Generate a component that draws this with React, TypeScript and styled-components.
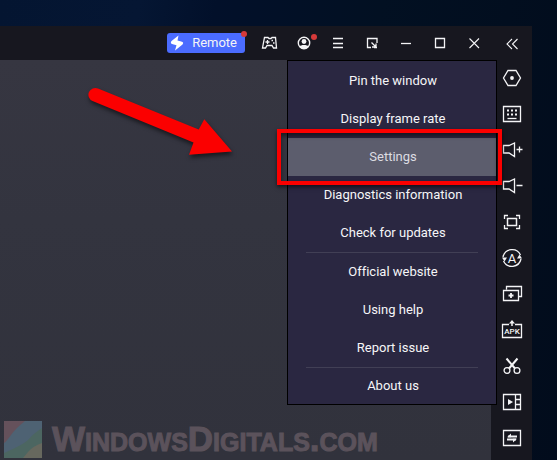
import React from "react";
import styled, { createGlobalStyle, css } from "styled-components";

const GlobalStyle = createGlobalStyle`
  *, *::before, *::after { box-sizing: border-box; }
  html, body, #root { height: 100%; }
  body { margin: 0; overflow: hidden; font-family: Roboto, "Liberation Sans", sans-serif; }
  button { font: inherit; border: 0; padding: 0; color: inherit; background: none; cursor: pointer; }
`;

const Desktop = styled.div`
  height: 100%;
  padding: 26px 25px 0 0;
  background: linear-gradient(100deg, #041531 0%, #051633 22%, #02102a 34%, #021022 60%, #020c1c 100%);
`;

const Window = styled.div`
  position: relative;
  height: 100%;
  display: flex;
  flex-direction: column;
  background: #17171f;
  color: #f4f4f6;
`;

const TitleBar = styled.header`
  flex: none;
  height: 34px;
  display: flex;
  align-items: center;
  justify-content: flex-end;
`;

const RemoteButton = styled.button`
  position: relative;
  display: flex;
  align-items: center;
  gap: 8px;
  height: 20px;
  margin-right: 8px;
  padding: 0 8px 0 3px;
  border-radius: 3px;
  background: #4b6cff;
  font-size: 13px;
  line-height: 20px;
`;

const BarButton = styled.button<{ $wide?: boolean }>`
  position: relative;
  width: ${(p) => (p.$wide ? 41 : 34)}px;
  height: 34px;
  display: grid;
  place-items: center;
`;

const Dot = styled.span<{ $corner?: boolean }>`
  position: absolute;
  width: 6px;
  height: 6px;
  border-radius: 50%;
  background: #d63a3a;
  ${(p) =>
    p.$corner
      ? css`top: -2px; right: -2px;`
      : css`top: 8px; right: 4px;`}
`;

const Body = styled.div`
  flex: 1;
  min-height: 0;
  display: flex;
`;

const Canvas = styled.main`
  position: relative;
  flex: 1;
  min-width: 0;
  display: flex;
  align-items: flex-end;
  background: linear-gradient(#363641, #33343f 40%, #31323c);
`;

const Watermark = styled.div`
  display: flex;
  align-items: center;
  gap: 10px;
  padding: 0 0 2px 4px;
`;

const WatermarkText = styled.span`
  font: 700 35px/38px "Liberation Sans", sans-serif;
  font-variant: small-caps;
  color: #5b525b;
  -webkit-text-stroke: 1px #5b525b;
  white-space: nowrap;
`;

const Arrow = styled.svg`
  position: absolute;
  top: 20px;
  left: 80px;
  filter: drop-shadow(1px 3px 2px rgba(0, 0, 0, 0.55));
`;

const Sidebar = styled.nav`
  flex: none;
  width: 41px;
  display: flex;
  flex-direction: column;
  overflow: hidden;
`;

const ToolButton = styled.button`
  flex: none;
  height: 36px;
  display: grid;
  place-items: center;
`;

const Menu = styled.div`
  position: absolute;
  top: 34px;
  right: 35px;
  width: 210px;
  display: flex;
  flex-direction: column;
  padding-top: 1px;
  border: 1px solid #000;
  background: #2a2741;
`;

const MenuItem = styled.button<{ $active?: boolean; $last?: boolean }>`
  position: relative;
  height: ${(p) => (p.$last ? 36 : 38)}px;
  padding-left: 2px;
  font-size: 13px;
  line-height: 16px;
  font-variant-ligatures: none;
  text-align: center;
  color: ${(p) => (p.$active ? "#dcdce2" : "#f6f6f8")};
  background: ${(p) => (p.$active ? "#5c5d6d" : "transparent")};
`;

const Divider = styled.hr`
  width: 172px;
  height: 1px;
  margin: 0 auto;
  border: 0;
  background: #413f55;
`;

const Highlight = styled.span`
  position: absolute;
  inset: -9px -6px -9px -11px;
  border: 4px solid #fb0000;
  box-shadow: 0 2px 4px rgba(0, 0, 0, 0.6), inset 0 3px 4px rgba(0, 0, 0, 0.5);
  pointer-events: none;
`;

const Glyph = styled.svg`
  display: block;
  fill: none;
  stroke: currentColor;
  stroke-width: 1.3;
`;

const IconText = styled.text<{ $small?: boolean }>`
  font: ${(p) => (p.$small ? '500 8px Roboto, sans-serif' : "400 13px Roboto, sans-serif")};
  fill: currentColor;
  stroke: none;
  text-anchor: middle;
`;

const Icon = ({ size = 22, children }: { size?: number; children: React.ReactNode }) => (
  <Glyph width={size} height={size} viewBox={`0 0 ${size} ${size}`} aria-hidden="true">
    {children}
  </Glyph>
);

const barButtons = [
  {
    label: "Game controls",
    art: (
      <>
        <path d="M5.500 5.500h3.500l1 1h2l1-1h3.500l1 10.500h-3l-1.500-2.500h-5L6.500 16h-3z" strokeWidth="1.300" />
        <path d="M8.500 8v4M6.500 10h4" />
        <path d="M12.500 8.500h1.500M14 11h1.500" strokeWidth="1.500" />
      </>
    ),
  },
  {
    label: "Account",
    dot: true,
    art: (
      <>
        <circle cx="11" cy="11" r="5.700" strokeWidth="1.400" />
        <circle cx="11" cy="9.500" r="2.400" fill="currentColor" stroke="none" />
        <path d="M6.500 14.500c1-2 8-2 9 0-2 3-7 3-9 0z" fill="currentColor" stroke="none" />
      </>
    ),
  },
  { label: "Menu", art: <path d="M6 6.500h10M6 11.500h10M6 15.500h10" /> },
  {
    label: "Dock window",
    art: (
      <>
        <path d="M10 15.500H6.500v-9h9.500V11M16 15.500h-3" />
        <path d="M10.500 10.500l4 4M15 11.500v3.500h-4" />
      </>
    ),
  },
  { label: "Minimize", art: <path d="M6 11.500h10" /> },
  { label: "Maximize", art: <path d="M6.500 6.500h9v9h-9z" /> },
  { label: "Close", art: <path d="M6.500 6.500l9.500 9.500M16 6.500l-9.500 9.500" strokeWidth="1.100" /> },
];

const tools = [
  {
    label: "Quick settings",
    art: (
      <>
        <path d="M7 3.500h8l4.500 7.500-4.500 7.500H7L2.500 11z" />
        <circle cx="11" cy="11" r="1.900" fill="currentColor" stroke="none" />
      </>
    ),
  },
  {
    label: "Keyboard",
    art: (
      <>
        <path d="M2.500 3.500h17v15h-17z" />
        <path d="M6 7.500h2M10 7.500h2M14 7.500h2M6 11.500h2M10 11.500h2M14 11.500h2" strokeWidth="1.800" />
        <path d="M6.500 15.500h9" />
      </>
    ),
  },
  {
    label: "Volume up",
    art: <path d="M2.500 6.500h5.500l5.500-2.500v13.500l-5.500-3.500h-5.500zM15.500 10.500h6M18.500 7.500v6" />,
  },
  {
    label: "Volume down",
    art: <path d="M2.500 6.500h5.500l5.500-2.500v13.500l-5.500-3.500h-5.500zM15.500 10.500h6" />,
  },
  {
    label: "Full screen",
    art: (
      <>
        <path d="M3.500 8V4.500H7M15 4.500h3.500V8M18.500 14v3.500H15M7 17.500H3.500V14" />
        <path d="M6.500 7.500h9v7h-9z" strokeWidth="1.500" />
      </>
    ),
  },
  {
    label: "Auto rotate",
    art: (
      <>
        <path d="M2 10a9.300 9.300 0 0 1 17.500-2M20 12a9.300 9.300 0 0 1-17.500 2" />
        <path d="M1 10.500h5l-2.500 4zM21 11.500h-5l2.500-4z" fill="currentColor" stroke="none" />
        <IconText x="11" y="15.500">A</IconText>
      </>
    ),
  },
  {
    label: "New instance",
    art: (
      <>
        <path d="M5.500 6.500v-3h15v10h-3M2.500 7.500h15v10h-15z" />
        <path d="M10 10v5M7.500 12.500h5" strokeWidth="1.800" />
      </>
    ),
  },
  {
    label: "Install APK",
    art: (
      <>
        <path d="M8 5.500H1.500v13h19v-13H14" />
        <path d="M11 7V3" strokeWidth="1.500" />
        <path d="M8 4.500l3-3.500 3 3.500z" fill="currentColor" stroke="none" />
        <IconText $small x="11" y="15">APK</IconText>
      </>
    ),
  },
  {
    label: "Cut",
    art: (
      <>
        <circle cx="6" cy="15.500" r="2.900" />
        <circle cx="16" cy="15.500" r="2.900" />
        <path d="M5.500 3.500l8.500 10M16.500 3.500L8 13.500" strokeWidth="2" />
      </>
    ),
  },
  {
    label: "Record",
    art: (
      <>
        <path d="M2.500 3.500h17v15h-17zM14.500 3.500v15M14.500 8.500h5M14.500 13.500h5" />
        <path d="M7 8l5 3-5 3z" fill="currentColor" stroke="none" />
      </>
    ),
  },
  {
    label: "Transfer",
    art: (
      <>
        <path d="M2.500 3.500h17v15h-17z" />
        <path d="M7 9.500h9M6 12.500h9" strokeWidth="1.800" />
        <path d="M6 10.300L10 6.500v3.800zM16 11.700L12 15.500v-3.800z" fill="currentColor" stroke="none" />
      </>
    ),
  },
];

const menuGroups = [
  ["Pin the window", "Display frame rate", "Settings", "Diagnostics information", "Check for updates"],
  ["Official website", "Using help", "Report issue"],
  ["About us"],
];

export default function App() {
  return (
    <>
      <GlobalStyle />
      <Desktop>
        <Window>
          <TitleBar>
            <RemoteButton>
              <svg width="14" height="16" viewBox="0 0 14 16" aria-hidden="true">
                <path
                  d="M8.500 0.500L1.500 6Q0 8 2 9l4.500 1.200L5 15.500l7.500-6Q14 7.500 12 6.800L7.500 5.500z"
                  fill="#fff"
                />
              </svg>
              Remote
              <Dot $corner />
            </RemoteButton>
            {barButtons.map((b) => (
              <BarButton key={b.label} aria-label={b.label}>
                <Icon>{b.art}</Icon>
                {b.dot && <Dot />}
              </BarButton>
            ))}
            <BarButton $wide aria-label="Collapse sidebar">
              <Icon>
                <path d="M11 7l-5 5 5 5M16.500 7l-5 5 5 5" strokeWidth="1.100" />
              </Icon>
            </BarButton>
          </TitleBar>
          <Body>
            <Canvas>
              <Arrow width="160" height="86" viewBox="80 80 160 86" aria-hidden="true">
                <path
                  d="M98 88.500L198.700 129.500l5.600-10.200L232 151.500l-43 3.200 4.500-12.200L92.500 101A6.800 6.800 0 0 1 98 88.500z"
                  fill="#fb0000"
                />
              </Arrow>
              <Watermark>
                <svg width="38" height="37" viewBox="0 0 38 37" aria-hidden="true">
                  <path d="M0 0h38v37H0z" fill="#4e6273" />
                  <path d="M0 0h21Q12 7 7 14T0 22z" fill="#65515b" />
                  <path d="M38 7Q29 13 25 18T0 32v5h38z" fill="#4c6661" />
                  <path d="M38 22Q29 25 24 31l-5 6h19z" fill="#67685e" />
                </svg>
                <WatermarkText>WindowsDigitals.com</WatermarkText>
              </Watermark>
            </Canvas>
            <Sidebar>
              {tools.map((t) => (
                <ToolButton key={t.label} aria-label={t.label}>
                  <Icon>{t.art}</Icon>
                </ToolButton>
              ))}
            </Sidebar>
          </Body>
          <Menu role="menu">
            {menuGroups.map((group, i) => (
              <React.Fragment key={group[0]}>
                {i > 0 && <Divider />}
                {group.map((label) => (
                  <MenuItem
                    key={label}
                    role="menuitem"
                    $active={label === "Settings"}
                    $last={i === menuGroups.length - 1}
                  >
                    {label}
                    {label === "Settings" && <Highlight />}
                  </MenuItem>
                ))}
              </React.Fragment>
            ))}
          </Menu>
        </Window>
      </Desktop>
    </>
  );
}
